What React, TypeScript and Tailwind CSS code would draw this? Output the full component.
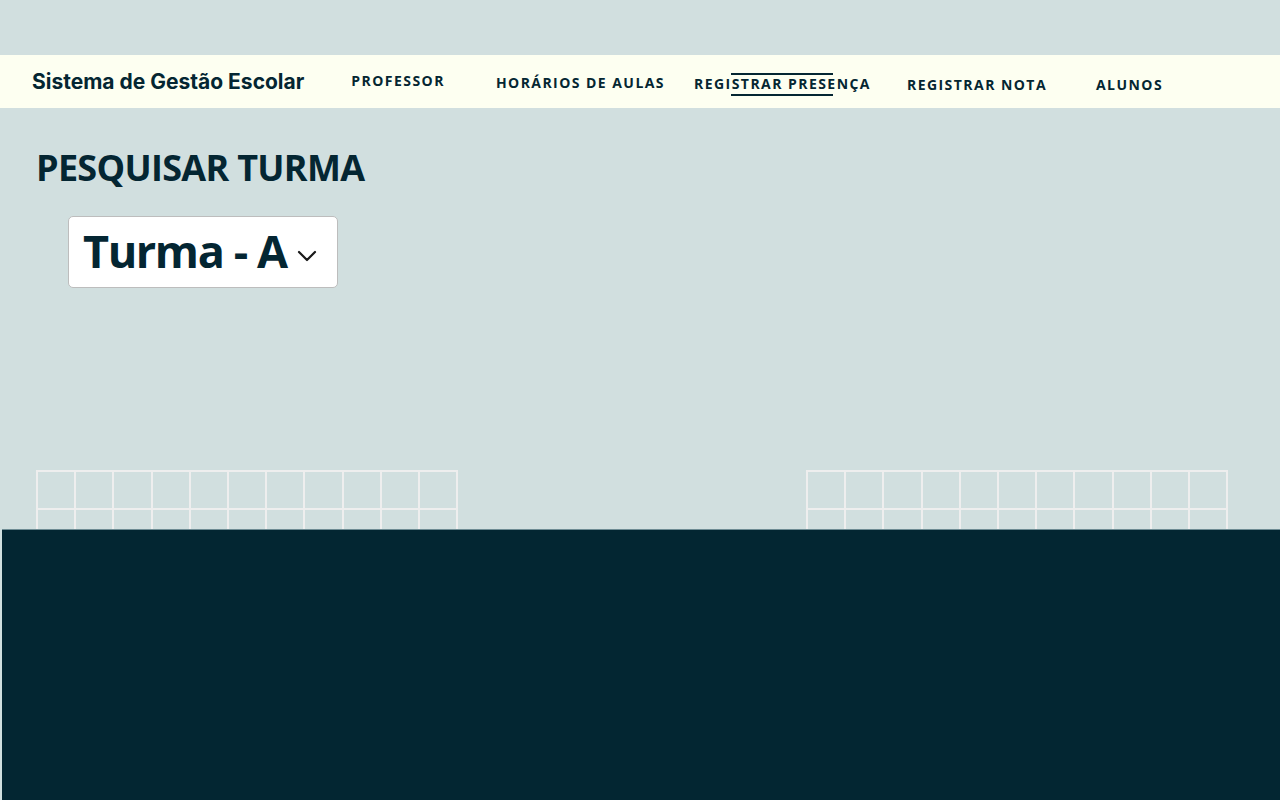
import React from "react";

const navText = "font-['Open_Sans',sans-serif] font-bold text-[14px] tracking-[1.45px] text-[#042632] whitespace-nowrap";

function Grid() {
  const cols = Array.from({ length: 11 });
  const rows = Array.from({ length: 2 });
  return (
    <div className="w-[422px] border-l-2 border-t-2 border-[#eeeeee]">
      {rows.map((_, r) => (
        <div key={r} className="flex">
          {cols.map((_, c) => (
            <div key={c} className="h-[38.4px] flex-1 border-r-2 border-b-2 border-[#eeeeee]" />
          ))}
        </div>
      ))}
    </div>
  );
}

export default function App() {
  return (
    <div className="w-[1280px] h-[800px] overflow-hidden bg-[#d1dfdf] relative">
      <div className="h-[55px]" />
      <nav className="h-[53px] bg-[#fdfff1] flex items-start">
        <div className="ml-[32px] mt-[11px] font-['Inter',sans-serif] font-bold text-[21px] text-[#042632] whitespace-nowrap">
          Sistema de Gestão Escolar
        </div>
        <div className={`${navText} ml-[47px] mt-[15px]`}>PROFESSOR</div>
        <div className={`${navText} ml-[51px] mt-[17px]`}>HORÁRIOS DE AULAS</div>
        <div className={`${navText} ml-[29px] mt-[18px] relative`}>
          REGISTRAR PRESENÇA
          <span className="absolute left-[37px] top-[0px] w-[102px] h-[2px] bg-[#042632]" />
          <span className="absolute left-[37px] top-[21px] w-[102px] h-[2px] bg-[#042632]" />
        </div>
        <div className={`${navText} ml-[36px] mt-[19px]`}>REGISTRAR NOTA</div>
        <div className={`${navText} ml-[49px] mt-[19px]`}>ALUNOS</div>
      </nav>
      <h1 className="ml-[36px] mt-[36px] font-['Open_Sans',sans-serif] font-bold text-[36px] tracking-[-0.7px] leading-[48px] text-[#042632] whitespace-nowrap">
        PESQUISAR TURMA
      </h1>
      <div className="ml-[68px] mt-[24px] w-[270px] h-[72px] bg-white border border-[#bdbdbd] rounded-[5px] flex items-center pl-[14px]">
        <span className="font-['Open_Sans',sans-serif] font-bold text-[45px] tracking-[-1.4px] leading-none text-[#042632] whitespace-nowrap mt-[-4px]">
          Turma - A
        </span>
        <svg className="ml-[10px] mt-[8px]" width="20" height="12" viewBox="0 0 20 12" fill="none">
          <path d="M2 2l8 8 8-8" stroke="#1a1a1a" strokeWidth="2.2" strokeLinecap="round" strokeLinejoin="round" />
        </svg>
      </div>
      <div className="mt-[182px] flex px-[36px] gap-[348px]">
        <Grid />
        <Grid />
      </div>
      <div className="absolute left-[2px] top-[529px] right-0 bottom-0 bg-[#032632] border-t border-[#6d8b93]" />
    </div>
  );
}
